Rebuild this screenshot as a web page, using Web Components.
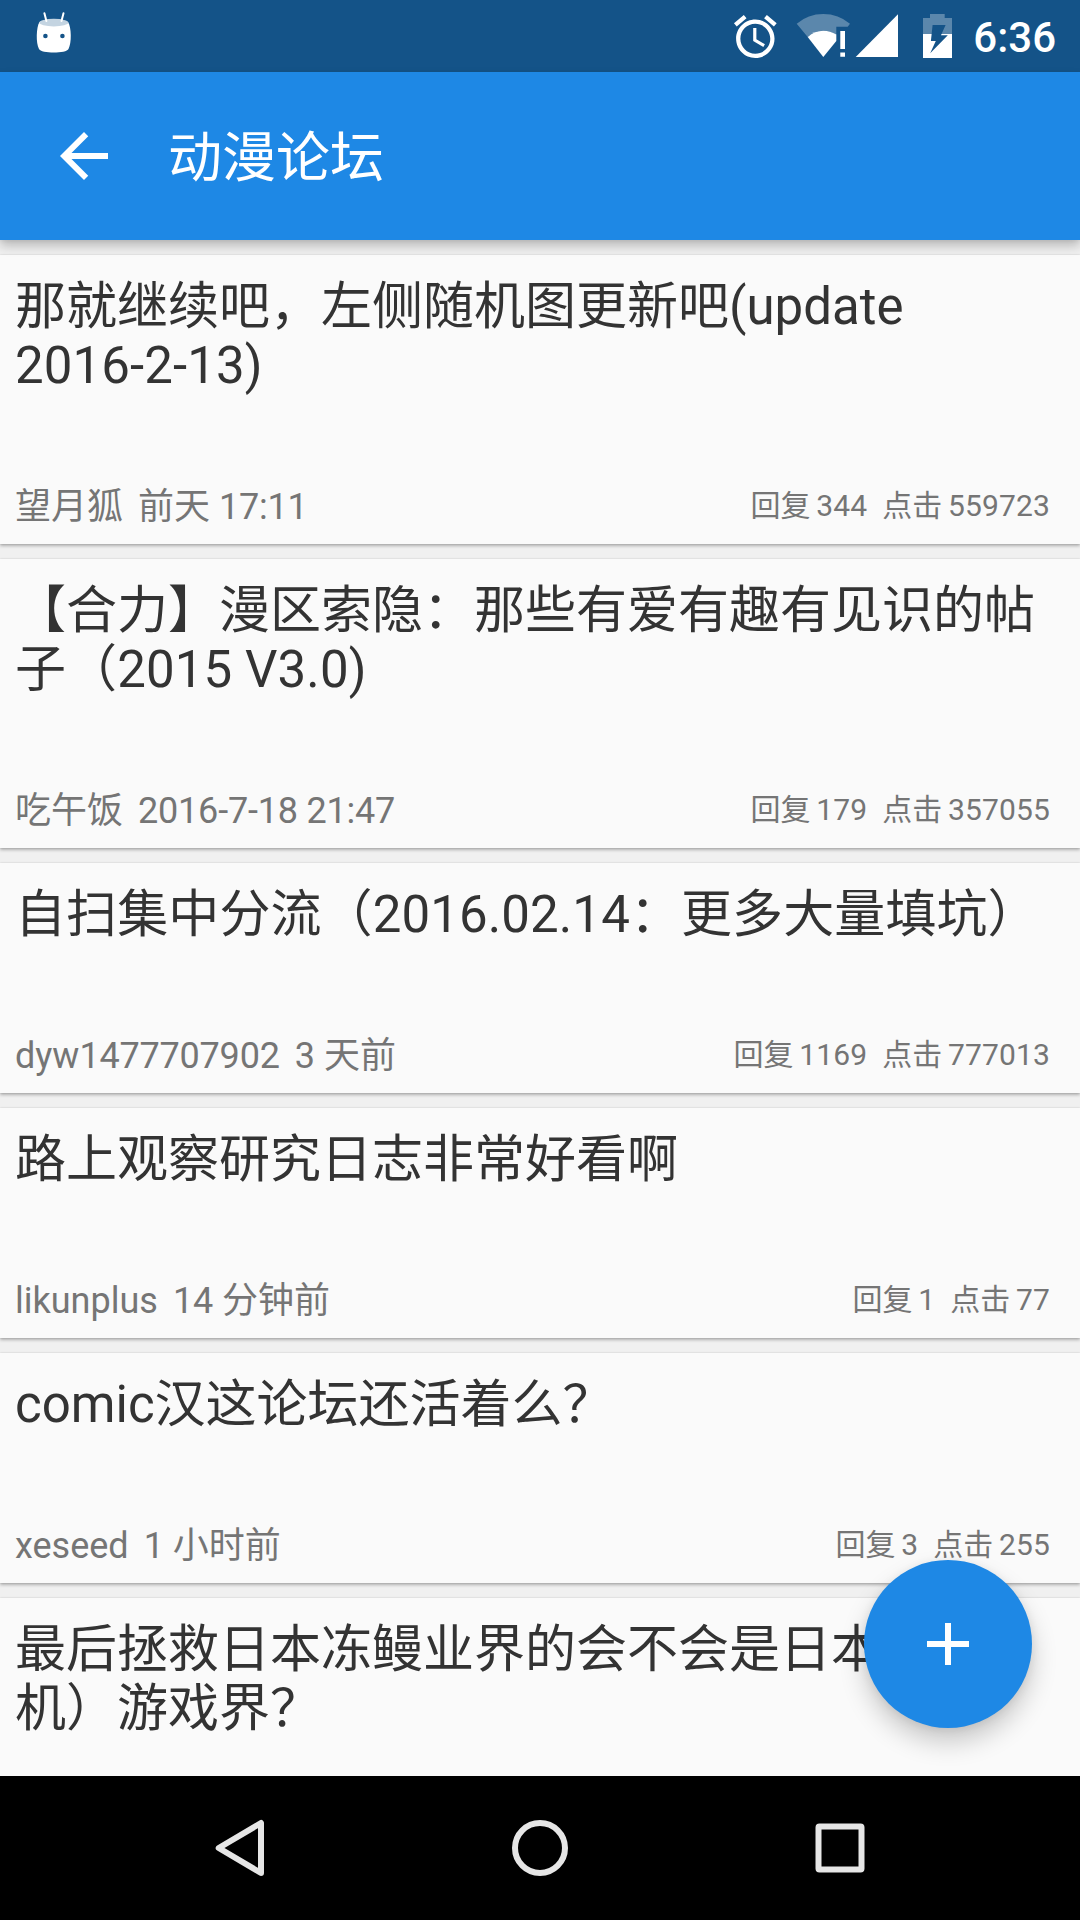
<!DOCTYPE html>
<html lang="zh-CN">
<head>
<meta charset="utf-8">
<title>动漫论坛</title>
<style>
html, body { margin: 0; padding: 0; }
body { width: 1080px; height: 1920px; overflow: hidden; background: #f0f0f0; font-family: Roboto, "Noto Sans CJK SC", sans-serif; text-spacing-trim: space-all; }
</style>
</head>
<body>
<forum-screen>
  <status-bar slot="status" time="6:36"></status-bar>
  <app-bar slot="bar">动漫论坛</app-bar>
  <thread-card author="望月狐" when="前天 17:11" replies="344" views="559723">那就继续吧，左侧随机图更新吧(update<br><thread-num>2016-2-13)</thread-num></thread-card>
  <thread-card author="吃午饭" when="2016-7-18 21:47" replies="179" views="357055">【合力】漫区索隐：那些有爱有趣有见识的帖<br><thread-num>子（2015 V3.0)</thread-num></thread-card>
  <thread-card author="dyw1477707902" when="3 天前" replies="1169" views="777013"><thread-num>自扫集中分流（2016.02.14：更多大量填坑）</thread-num></thread-card>
  <thread-card author="likunplus" when="14 分钟前" replies="1" views="77">路上观察研究日志非常好看啊</thread-card>
  <thread-card author="xeseed" when="1 小时前" replies="3" views="255">comic汉这论坛还活着么？</thread-card>
  <thread-card>最后拯救日本冻鳗业界的会不会是日本（手<br>机）游戏界？</thread-card>
  <add-button slot="fab"></add-button>
  <nav-bar slot="nav"></nav-bar>
</forum-screen>
<script>
const define = (name, html, setup) => customElements.define(name, class extends HTMLElement {
  constructor() {
    super();
    this.attachShadow({ mode: 'open' }).innerHTML = html;
  }
  connectedCallback() { if (setup) setup(this, this.shadowRoot); }
});

define('status-bar', `
<style>
:host { display: flex; height: 72px; background: #145388; color: #fff; justify-content: space-between; flex: none; }
svg { display: block; }
.right { display: flex; }
.time { font-weight: 500; font-size: 42px; line-height: 76px; width: 84px; margin-right: 24px; text-align: right; white-space: nowrap; }
</style>
<svg width="108" height="72" viewBox="0 0 108 72">
  <path d="M39.5 22Q53.7 16 68 22C71.5 27 71.8 43 68.5 49C66.5 53.8 41 53.8 39 49C35.8 43 36.2 27 39.5 22Z" fill="#fff"/>
  <ellipse cx="53.8" cy="22.6" rx="14.6" ry="3.8" fill="#c4d4e1"/>
  <path d="M44.4 13.2L46.4 21M63.5 13.2L61.5 21" stroke="#fff" stroke-width="2" stroke-linecap="round"/>
  <circle cx="45.4" cy="36" r="2.3" fill="#145388"/><circle cx="62.4" cy="36" r="2.3" fill="#145388"/>
</svg>
<div class="right">
<svg width="242" height="72" viewBox="730 0 242 72" fill="#fff">
  <g transform="translate(729.7 11) scale(2.135)"><path d="M22 5.72l-4.6-3.86-1.29 1.53 4.6 3.86L22 5.72zM7.88 3.39L6.6 1.86 2 5.71l1.29 1.53 4.59-3.85zM12.5 8H11v6l4.75 2.85.75-1.23-4-2.37V8zM12 4c-4.97 0-9 4.03-9 9s4.02 9 9 9c4.97 0 9-4.03 9-9s-4.03-9-9-9zm0 16c-3.87 0-7-3.13-7-7s3.13-7 7-7 7 3.13 7 7-3.13 7-7 7z"/></g>
  <path d="M796.7 23.7Q808 14 823.3 14Q838.5 14 850 23.7L847.7 26.7H836.3V35Q830.5 30.7 823.3 30.7Q814.5 30.7 807.7 37Z" fill="#5b87ac"/>
  <path d="M807.7 37Q814.5 30.7 823.3 30.7Q830.5 30.7 836.3 34.5V41L823.3 57Z"/>
  <path d="M840.3 31h4.7v18h-4.7zM840.3 52.5h4.7v4.3h-4.7z"/>
  <path d="M855.7 57H898V14.3Z"/>
  <path d="M923 34V18H930V14H944.7V18H952V34Z" fill="#5b87ac"/>
  <path d="M923 34H952V58H923Z"/>
  <path d="M932.6 25H945.6L941 35.3H947.8L930.2 53.3L935.8 41H930.9Z" fill="#145388"/>
</svg>
<div class="time"></div>
</div>`, (el, root) => { root.querySelector('.time').textContent = el.getAttribute('time'); });

define('app-bar', `
<style>
:host { display: flex; align-items: center; gap: 48px; height: 168px; padding-left: 48px; box-sizing: border-box; background: #1e88e5; color: #fff; font-size: 54px; line-height: 64px; flex: none; position: relative; z-index: 1; box-shadow: 0 6px 10px rgba(0,0,0,.22), 0 1px 4px rgba(0,0,0,.06); }
.title { padding-top: 5px; }
</style>
<svg width="72" height="72" viewBox="0 0 24 24" fill="#fff"><path d="M20 11H7.83l5.59-5.59L12 4l-8 8 8 8 1.41-1.41L7.83 13H20z"/></svg>
<div class="title"><slot></slot></div>`);

/* A title line that holds figures, tracked slightly wider than plain text. */
define('thread-num', `
<style>:host { display: inline; letter-spacing: .1px; }</style><slot></slot>`);

define('thread-card', `
<style>
:host { display: flex; flex-direction: column; flex: none; background: #fafafa; padding: 22px 30px 5px 15px; box-shadow: 0 2px 3px rgba(0,0,0,.26), 0 0 2px rgba(0,0,0,.14); }
.title { font-size: 51px; line-height: 59px; color: #333; white-space: nowrap; margin-bottom: 81px; }
.meta { display: flex; justify-content: space-between; height: 63px; align-items: baseline; color: #757575; white-space: nowrap; }
.who, .count { display: flex; gap: 15px; }
.who { font-size: 36px; line-height: 63px; }
.count { font-size: 30px; line-height: 40px; word-spacing: -1.6px; position: relative; top: -3px; }
.who i { font-style: normal; letter-spacing: -.2px; }
.count i { font-style: normal; letter-spacing: .12px; }
</style>
<div class="title"><slot></slot></div>
<div class="meta">
  <div class="who"><span class="author"></span><span class="when"></span></div>
  <div class="count"><span class="replies"></span><span class="views"></span></div>
</div>`, (el, root) => {
  if (!el.hasAttribute('author')) return;
  const put = (c, t) => { root.querySelector(c).innerHTML = t.replace(/[0-9][0-9:\- ]*[0-9]/g, '<i>$&</i>'); };
  put('.author', el.getAttribute('author'));
  put('.when', el.getAttribute('when'));
  put('.replies', '回复 ' + el.getAttribute('replies'));
  put('.views', '点击 ' + el.getAttribute('views'));
});

define('add-button', `
<style>
:host { display: flex; align-items: center; justify-content: center; width: 168px; height: 168px; border-radius: 50%; background: #1e88e5; box-shadow: 0 14px 26px rgba(0,0,0,.2), 0 2px 10px rgba(0,0,0,.08); }
</style>
<svg width="42" height="42" viewBox="0 0 42 42"><path d="M18 0h6v18h18v6H24v18h-6V24H0v-6h18z" fill="#fff"/></svg>`);

define('nav-bar', `
<style>
:host { display: flex; justify-content: center; height: 144px; background: #000; flex: none; position: relative; z-index: 3; }
div { width: 300px; display: flex; align-items: center; justify-content: center; }
svg { fill: none; stroke: #e6e6e6; stroke-width: 6; stroke-linejoin: round; }
</style>
<div><svg width="60" height="60" viewBox="0 0 60 60"><path d="M8.7 30L51 5V55Z"/></svg></div>
<div><svg width="60" height="60" viewBox="0 0 60 60"><circle cx="30" cy="30" r="25"/></svg></div>
<div><svg width="60" height="60" viewBox="0 0 60 60"><rect x="8.5" y="8.5" width="43" height="43" rx="1"/></svg></div>`);

define('forum-screen', `
<style>
:host { display: flex; flex-direction: column; width: 1080px; height: 1920px; overflow: hidden; background: #f0f0f0; }
main { flex: 1; min-height: 0; position: relative; }
.list { display: flex; flex-direction: column; gap: 15px; height: 100%; box-sizing: border-box; padding-top: 15px; overflow: hidden; }
.fab { position: absolute; right: 48px; bottom: 48px; z-index: 2; }
</style>
<slot name="status"></slot>
<slot name="bar"></slot>
<main>
  <div class="list"><slot></slot></div>
  <div class="fab"><slot name="fab"></slot></div>
</main>
<slot name="nav"></slot>`);
</script>
</body>
</html>
